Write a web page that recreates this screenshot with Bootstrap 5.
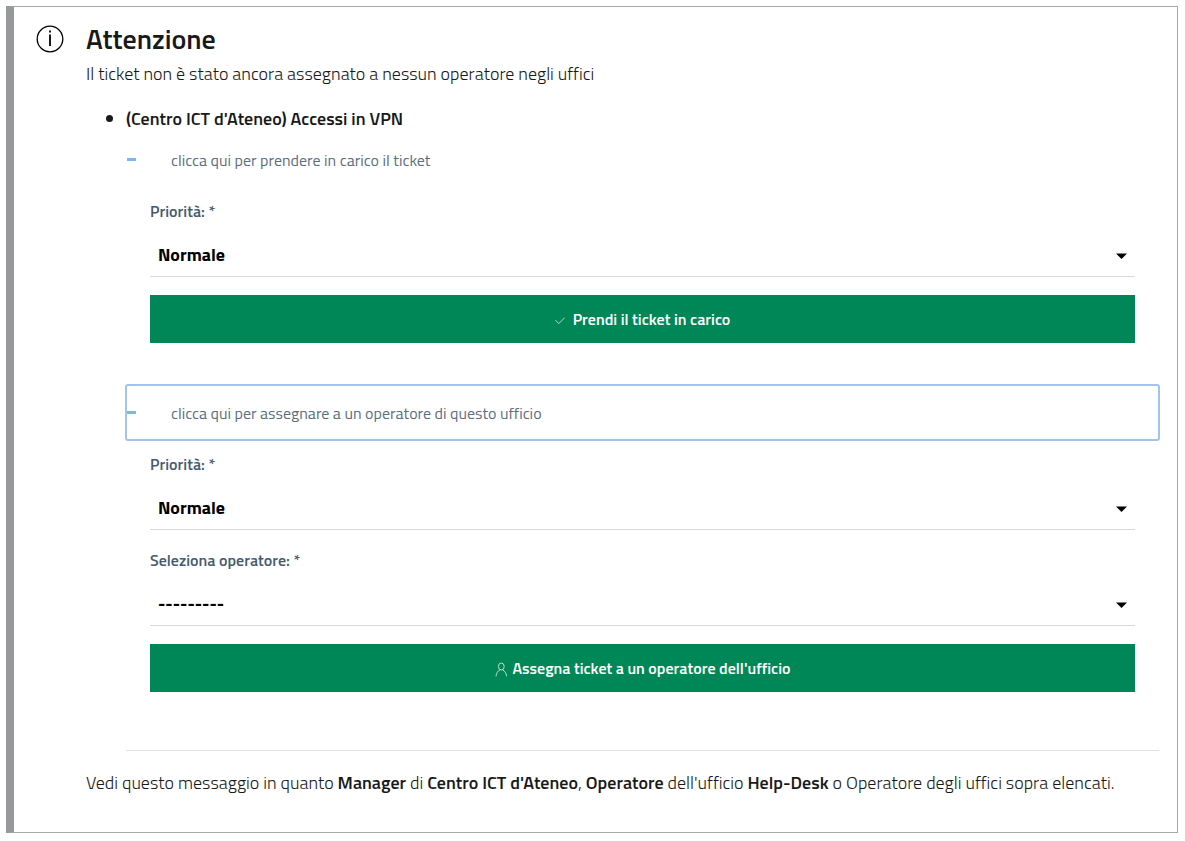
<!DOCTYPE html>
<html lang="it">
<head>
<meta charset="utf-8">
<meta name="viewport" content="width=device-width, initial-scale=1">
<title>Attenzione</title>
<link href="https://cdn.jsdelivr.net/npm/bootstrap@5.3.0/dist/css/bootstrap.min.css" rel="stylesheet">
<style>
  body { font-family: "Titillium Web", Roboto, "Liberation Sans", sans-serif; font-size: 18px; line-height: 27px; font-weight: 300; color: #19191a; }
  strong, .office-name { font-weight: 600; }
  .notice { margin: 6px 7px 8px 6px; padding: 16px 18px 36px 72px; border: 1px solid #a6a7a8; border-left: 8px solid #979899; border-radius: 0; }
  .notice-icon { left: 22px; top: 18px; }
  .notice-title { font-size: 28px; line-height: 32px; font-weight: 600; margin-bottom: 5px; }
  .notice-text { margin-bottom: 18px; }
  .offices { padding-left: 40px; }
  .toggle { height: 55px; padding: 1px 0 0 1px; gap: 35px; border: 0; background: none; color: #5c6f82; font-size: 16px; font-weight: 400; text-align: left; }
  .toggle::before { content: ""; width: 9px; height: 3px; margin-bottom: 2px; background: #7ab8f5; }
  .toggle.active { outline: 2px solid #a2c4ea; outline-offset: -1px; border-radius: 2px; }
  .panel { padding: 12px 24px 42px; }
  .field { margin-bottom: 18px; }
  .field label { display: block; margin-bottom: 14px; font-size: 16px; line-height: 24px; font-weight: 600; color: #455b71; }
  .field .form-select { height: 40px; padding: 0 30px 4px 8px; border: 0; border-bottom: 1px solid #d9dadb; border-radius: 0; font-size: 18px; font-weight: 700; color: #000;
    background-image: url("data:image/svg+xml,%3Csvg xmlns='http://www.w3.org/2000/svg' viewBox='0 0 11 6'%3E%3Cpath d='M0 .5h11L5.5 6z'/%3E%3C/svg%3E"); background-size: 11px 6px; background-position: right 8px top 16px; }
  .btn-green { --bs-btn-color: #fff; --bs-btn-bg: #008758; --bs-btn-border-color: #008758; --bs-btn-hover-color: #fff; --bs-btn-hover-bg: #00734b; height: 48px; border-radius: 0; font-size: 16px; line-height: 24px; font-weight: 600; }
  .divider { margin: 16px 0 18px; border-color: #b4b5b6; opacity: .4; }
</style>
</head>
<body>
<main class="notice position-relative" role="alert">
  <svg class="notice-icon position-absolute" width="28" height="28" viewBox="0 0 28 28" fill="none" stroke="#000" aria-hidden="true"><circle cx="14" cy="14" r="12.8" stroke-width="1.3"/><path d="M14 9.500v11.500M14 5.500v2" stroke-width="1.8"/></svg>
  <h1 class="notice-title">Attenzione</h1>
  <p class="notice-text">Il ticket non è stato ancora assegnato a nessun operatore negli uffici</p>
  <ul class="offices mb-0">
    <li>
      <span class="office-name">(Centro ICT d'Ateneo) Accessi in VPN</span>
      <button type="button" class="toggle d-flex align-items-center w-100" data-bs-toggle="collapse" data-bs-target="#take" aria-expanded="true" aria-controls="take">clicca qui per prendere in carico il ticket</button>
      <div id="take" class="collapse show">
        <form class="panel">
          <div class="field">
            <label for="priority-take">Priorità: *</label>
            <select id="priority-take" class="form-select"><option>Normale</option></select>
          </div>
          <button type="submit" class="btn btn-green w-100 d-flex justify-content-center align-items-center gap-2">
            <svg width="10" height="10" viewBox="0 0 10 10" fill="none" stroke="#fff" stroke-width=".7" aria-hidden="true"><path d="M.5 6.200 3.800 9.600 9.800 3.600"/></svg>Prendi il ticket in carico</button>
        </form>
      </div>
      <button type="button" class="toggle active d-flex align-items-center w-100" data-bs-toggle="collapse" data-bs-target="#assign" aria-expanded="true" aria-controls="assign">clicca qui per assegnare a un operatore di questo ufficio</button>
      <div id="assign" class="collapse show">
        <form class="panel">
          <div class="field">
            <label for="priority-assign">Priorità: *</label>
            <select id="priority-assign" class="form-select"><option>Normale</option></select>
          </div>
          <div class="field">
            <label for="operator">Seleziona operatore: *</label>
            <select id="operator" class="form-select"><option>---------</option></select>
          </div>
          <button type="submit" class="btn btn-green w-100 d-flex justify-content-center align-items-center gap-1">
            <svg width="14" height="18" viewBox="0 0 14 18" fill="none" stroke="#fff" stroke-width=".7" aria-hidden="true"><ellipse cx="7.300" cy="7.500" rx="2.900" ry="3.500"/><path d="M2 17.300c.3-3.300 1.900-5.400 4.100-6.500M12.600 17.300c-.3-3.300-1.900-5.400-4.100-6.500"/></svg>Assegna ticket a un operatore dell'ufficio</button>
        </form>
      </div>
      <hr class="divider">
    </li>
  </ul>
  <p class="mb-0">Vedi questo messaggio in quanto <strong>Manager</strong> di <strong>Centro ICT d'Ateneo</strong>, <strong>Operatore</strong> dell'ufficio <strong>Help-Desk</strong> o Operatore degli uffici sopra elencati.</p>
</main>
<script src="https://cdn.jsdelivr.net/npm/bootstrap@5.3.0/dist/js/bootstrap.bundle.min.js"></script>
</body>
</html>
